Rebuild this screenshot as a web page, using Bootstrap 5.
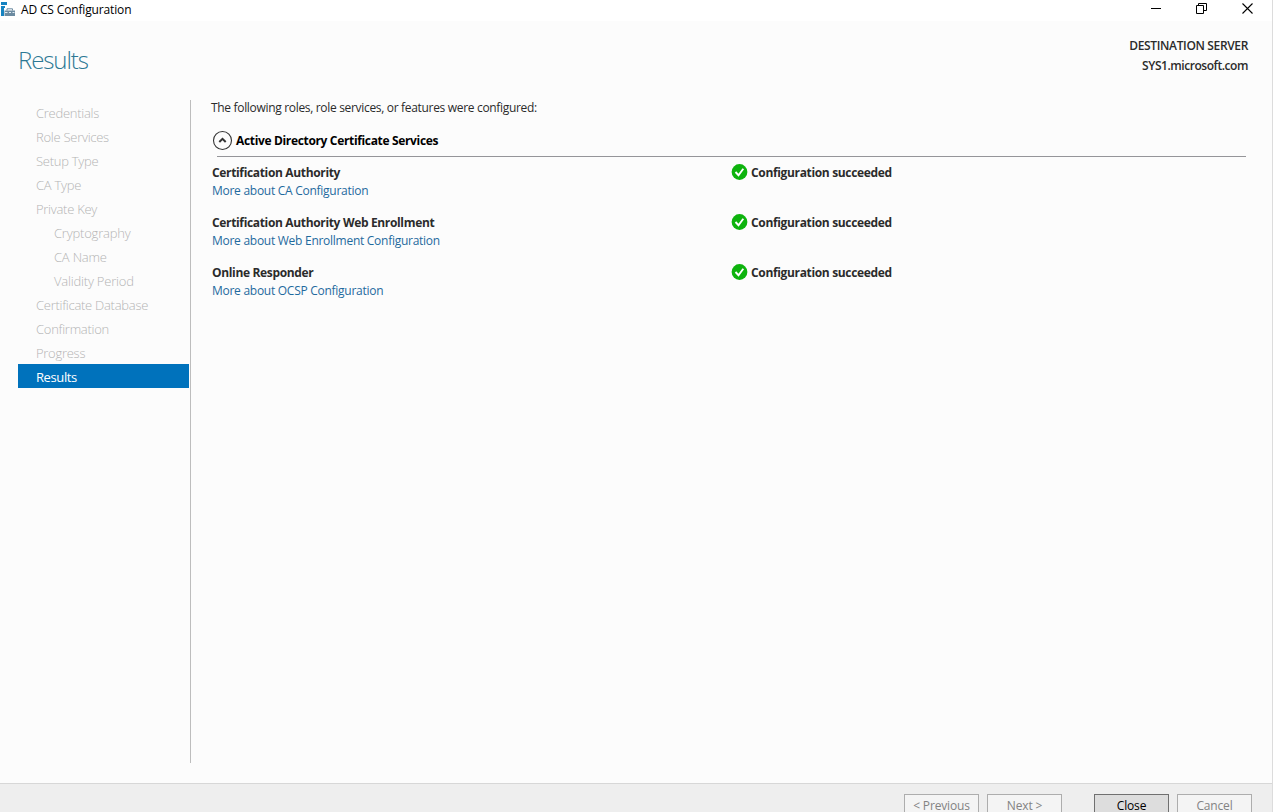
<!DOCTYPE html>
<html lang="en">
<head>
<meta charset="utf-8">
<meta name="viewport" content="width=device-width, initial-scale=1">
<title>AD CS Configuration</title>
<link href="https://cdn.jsdelivr.net/npm/bootstrap@5.3.0/dist/css/bootstrap.min.css" rel="stylesheet">
<style>
body{font-family:"Open Sans","Noto Sans",sans-serif;font-size:12px;line-height:18px;color:#2b2b2b;background:#fcfcfc}
.window{height:812px;border-right:1px solid #dcdcdc}
.titlebar{height:21px;background:#fff;color:#000}
.titlebar .app-icon{margin:1px 5px 0 0}
.title-text{letter-spacing:-.15px;line-height:20px}
.caption-buttons{gap:35px;padding-right:19px;height:17px}
.page-head{height:79px;padding:0 24px 0 18px}
.page-title{font-size:24px;font-weight:300;line-height:32px;color:#2c7894;letter-spacing:-1.1px;margin:23px 0 0}
.destination{font-size:12px;line-height:20px;padding-top:15px;font-weight:600;letter-spacing:-.35px}
.dest-b{letter-spacing:-.45px}
.steps{width:191px;height:663px;border-right:1px solid #bdbdbd;padding:0 1px 0 18px}
.steps .nav-link{height:24px;line-height:26px;padding:0 0 0 18px;font-size:13px;font-weight:300;color:#b4b4b4;letter-spacing:-.27px;border-radius:0}
.steps .nav-link.sub{padding-left:36px;letter-spacing:-.2px}
.steps .nav-link.active{background:#0072bc;color:#fff;letter-spacing:-.4px;font-weight:400}
.results{padding:0 26px 0 20px}
.intro{line-height:16px;letter-spacing:-.32px}
.group-head{margin:14px 0 0 1px;height:22px;gap:3px;color:#000}
.group-head svg{margin-top:-1px}
.group-rule{border-top:1px solid #959599;margin:4px 0 7px 6px}
.strong-text{font-weight:700;letter-spacing:-.34px}
.result-row{height:50px;padding-left:1px}
.result-name{width:519px}
.result-name a{color:#1f6a9e;text-decoration:none;letter-spacing:-.27px}
.status{height:18px;gap:3px}
.status svg{margin-top:-1px}
.footer-bar{height:29px;background:#eee;border-top:1px solid #d7d7d7;padding:10px 20px 0 0;gap:8px}
.footer-bar .btn{width:75px;height:24px;flex:none;padding:0;font-size:12px;line-height:22px;border:1px solid #adadad;border-radius:0;background:#f4f4f4;color:#838383;opacity:1;letter-spacing:-.15px}
.footer-bar .btn.close-btn{background:#ddd;border-color:#707070;color:#000;margin-left:24px}
</style>
</head>
<body>
<div class="window d-flex flex-column overflow-hidden">
  <header class="titlebar d-flex align-items-start flex-shrink-0">
    <svg class="app-icon" width="16" height="17" viewBox="0 0 16 17"><path d="M1 1h6v3H1zM1 5h4v10H1z" fill="#1683c1"/><path d="M4 7h11v8H4z" fill="#fff"/><path d="M4.500 9.500h10.500v5.500H4.500z" fill="#6c8ba1"/><path d="M7 9.500V7.800h5.500v1.700" fill="none" stroke="#6c8ba1"/><path d="M5 11.500h2.500M9 11.500h2M12.500 11.500h2" stroke="#e3edf3"/></svg>
    <span class="title-text">AD CS Configuration</span>
    <div class="caption-buttons d-flex align-items-center ms-auto">
      <svg width="10" height="11" viewBox="0 0 10 11"><path d="M0 5.500h10" stroke="#000"/></svg>
      <svg width="11" height="11" viewBox="0 0 11 11" fill="none" stroke="#000"><path d="M.5 2.500h7v8h-7zM2.500 2.500v-2h8v7h-3"/></svg>
      <svg width="11" height="11" viewBox="0 0 11 11"><path d="M.5.5l10 10M10.500.5l-10 10" stroke="#000" stroke-width="1.100"/></svg>
    </div>
  </header>
  <div class="page-head d-flex justify-content-between flex-shrink-0">
    <h1 class="page-title">Results</h1>
    <div class="destination text-end"><div>DESTINATION SERVER</div><div class="dest-b">SYS1.microsoft.com</div></div>
  </div>
  <div class="d-flex flex-grow-1">
    <nav class="steps nav flex-column flex-nowrap flex-shrink-0">
      <a class="nav-link">Credentials</a>
      <a class="nav-link">Role Services</a>
      <a class="nav-link">Setup Type</a>
      <a class="nav-link">CA Type</a>
      <a class="nav-link">Private Key</a>
      <a class="nav-link sub">Cryptography</a>
      <a class="nav-link sub">CA Name</a>
      <a class="nav-link sub">Validity Period</a>
      <a class="nav-link">Certificate Database</a>
      <a class="nav-link">Confirmation</a>
      <a class="nav-link">Progress</a>
      <a class="nav-link active">Results</a>
    </nav>
    <main class="results flex-grow-1">
      <div class="intro">The following roles, role services, or features were configured:</div>
      <div class="group-head d-flex align-items-center">
        <svg width="21" height="21" viewBox="0 0 21 21" fill="none"><circle cx="10.500" cy="10.500" r="9" stroke="#333" stroke-width="1.100"/><path d="M7.300 12l3.200-3.200 3.200 3.200" stroke="#333" stroke-width="2"/></svg>
        <span class="strong-text">Active Directory Certificate Services</span>
      </div>
      <div class="group-rule"></div>
      <div class="result-row d-flex">
        <div class="result-name"><div class="strong-text">Certification Authority</div><a href="#">More about CA Configuration</a></div>
        <div class="status d-flex align-items-center"><svg width="17" height="17" viewBox="0 0 17 17"><circle cx="8.500" cy="8" r="7.900" fill="#0db30d"/><path d="M4.500 8l3 3.200 4.800-6.400" fill="none" stroke="#fff" stroke-width="1.900"/></svg><span class="strong-text">Configuration succeeded</span></div>
      </div>
      <div class="result-row d-flex">
        <div class="result-name"><div class="strong-text">Certification Authority Web Enrollment</div><a href="#">More about Web Enrollment Configuration</a></div>
        <div class="status d-flex align-items-center"><svg width="17" height="17" viewBox="0 0 17 17"><circle cx="8.500" cy="8" r="7.900" fill="#0db30d"/><path d="M4.500 8l3 3.200 4.800-6.400" fill="none" stroke="#fff" stroke-width="1.900"/></svg><span class="strong-text">Configuration succeeded</span></div>
      </div>
      <div class="result-row d-flex">
        <div class="result-name"><div class="strong-text">Online Responder</div><a href="#">More about OCSP Configuration</a></div>
        <div class="status d-flex align-items-center"><svg width="17" height="17" viewBox="0 0 17 17"><circle cx="8.500" cy="8" r="7.900" fill="#0db30d"/><path d="M4.500 8l3 3.200 4.800-6.400" fill="none" stroke="#fff" stroke-width="1.900"/></svg><span class="strong-text">Configuration succeeded</span></div>
      </div>
    </main>
  </div>
  <footer class="footer-bar d-flex justify-content-end flex-shrink-0">
    <button class="btn" disabled>&lt; Previous</button>
    <button class="btn" disabled>Next &gt;</button>
    <button class="btn close-btn">Close</button>
    <button class="btn" disabled>Cancel</button>
  </footer>
</div>
<script src="https://cdn.jsdelivr.net/npm/bootstrap@5.3.0/dist/js/bootstrap.bundle.min.js"></script>
</body>
</html>
